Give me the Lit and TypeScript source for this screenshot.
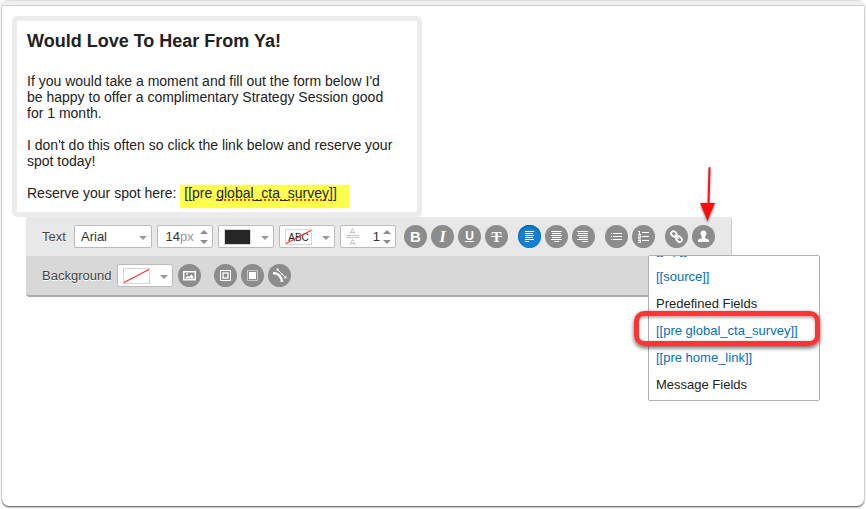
import { LitElement, html, css, svg, nothing } from "lit";
import { customElement, property } from "lit/decorators.js";

const bars = (rows: number[][]) =>
  rows.map(([x, y, w, h = 1]) => svg`<rect x=${x} y=${y} width=${w} height=${h} fill="#fff"/>`);

const icons: Record<string, unknown> = {
  bold: svg`<text x="11.5" y="17" text-anchor="middle" font-family="Liberation Sans, sans-serif" font-weight="bold" font-size="15" fill="#fff">B</text>`,
  italic: svg`<text x="11.5" y="17" text-anchor="middle" font-family="Liberation Serif, serif" font-style="italic" font-weight="bold" font-size="16" fill="#fff">I</text>`,
  underline: svg`<text x="11.5" y="15" text-anchor="middle" font-family="Liberation Sans, sans-serif" font-weight="bold" font-size="12" fill="#fff">U</text>${bars([[7, 16, 9]])}`,
  strike: svg`<text x="11.5" y="17" text-anchor="middle" font-family="Liberation Serif, serif" font-weight="bold" font-size="15" fill="#fff">T</text>${bars([[6, 11, 11]])}`,
  left: bars([[7, 6, 9], [7, 8, 8], [7, 10, 9], [7, 12, 8], [7, 14, 9], [7, 16, 4]]),
  center: bars([[6, 6, 11], [7, 8, 9], [6, 10, 11], [7, 12, 9], [6, 14, 11], [9, 16, 5]]),
  right: bars([[5, 6, 11], [6, 8, 10], [5, 10, 11], [7, 12, 9], [5, 14, 11], [10, 16, 6]]),
  bullets: bars([[6, 8, 1], [8, 8, 9], [6, 11, 1], [8, 11, 9], [6, 14, 1], [8, 14, 9]]),
  numbers: svg`${bars([[10, 7, 7], [10, 11, 7], [10, 15, 7]])}
    <path d="M6 6.5h1.5v3M6 9.5h3M6 11h2.5v1.5H6.5V14H9M6 15.5h2.5v1.5H7M8.5 17v.5H6" fill="none" stroke="#fff" stroke-width="1"/>`,
  link: svg`<g fill="none" stroke="#fff" stroke-width="1.8" transform="rotate(45 11.5 11.5)">
    <rect x="5" y="9.3" width="6" height="4.6" rx="2.3"/><rect x="12.3" y="9.3" width="6" height="4.6" rx="2.3"/><path d="M9 11.6h5.500" stroke-width="1.400"/></g>`,
  person: svg`<path d="M11.5 5.500c-2 0-3 1.300-2.900 3.200.1 1.500.7 2.400 1.300 3v1.200c-1 .8-3.900.9-3.900 2.800V17h11v-1.300c0-1.900-2.900-2-3.900-2.800v-1.200c.6-.6 1.200-1.500 1.300-3 .1-1.900-.9-3.200-2.900-3.200z" fill="#fff"/>`,
  image: svg`<rect x="5.750" y="7.750" width="11.500" height="8" fill="none" stroke="#fff" stroke-width="1.500"/>
    <path d="M7.500 14.500v-1l2-1.500 1.500.500 2.500-2 2 2.500v1.500z" fill="#fff"/><circle cx="9" cy="10" r=".9" fill="#fff"/>`,
  border: svg`<rect x="6.500" y="6.500" width="10" height="10" fill="none" stroke="#fff"/><rect x="9" y="9" width="5" height="5" fill="none" stroke="#fff" stroke-width="1.300"/>`,
  padding: svg`<rect x="6.500" y="6.500" width="10" height="10" fill="none" stroke="#fff" stroke-dasharray="1 1"/><rect x="8" y="8" width="7" height="7" fill="#fff"/>`,
  radius: svg`<path d="M5 9c5 0 8.500 3.500 9 9" fill="none" stroke="#fff" stroke-width="2.500"/>
    <path d="M9.500 5.500l8 8" stroke="#fff"/><path d="M8.500 4.500h2v2h-2zM16.500 12.500h2v2h-2z" fill="#fff"/><path d="M13 9h1.500v1.500H13z" fill="#fff"/>`,
};

const caret = html`<svg class="caret" width="8" height="4" aria-hidden="true"><path d="M0 0h8l-4 4z" fill="#999"/></svg>`;

@customElement("tool-button")
class ToolButton extends LitElement {
  @property() icon = "";
  @property() label = "";
  @property({ type: Boolean }) active = false;
  static styles = css`
    :host { display: block; }
    .tool { display: block; width: 23px; height: 23px; padding: 0; border: 0; border-radius: 50%; background: #8c8c8c; cursor: pointer; }
    .active { background: #127fd2; box-shadow: inset 0 1px 2px #0a5590; }
    svg { display: block; }
  `;
  render() {
    return html`<button class="tool ${this.active ? "active" : ""}" aria-label=${this.label} aria-pressed=${this.active ? "true" : "false"}>
      <svg width="23" height="23" viewBox="0 0 23 23" aria-hidden="true">${icons[this.icon]}</svg>
    </button>`;
  }
}

@customElement("color-picker")
class ColorPicker extends LitElement {
  @property() label = "";
  @property() kind = "none";
  static styles = css`
    :host { display: block; }
    .picker { display: flex; align-items: center; justify-content: space-between; box-sizing: border-box; width: 56px; height: 23px; padding: 0 4px 0 5px; border: 1px solid #bbb; border-radius: 2px; background: #fff; }
    .caret { margin-top: 2px; }
  `;
  render() {
    return html`<button class="picker" aria-label=${this.label}>
      <svg width="27" height="16" viewBox="0 0 27 16" aria-hidden="true">
        <rect x=".5" y=".5" width="26" height="15" fill=${this.kind === "dark" ? "#262626" : "#fff"} stroke="#d6d6d6"/>
        ${this.kind === "text" ? svg`<text x="13.5" y="12" text-anchor="middle" font-family="Liberation Sans, sans-serif" font-size="10" fill="#222">ABC</text>` : nothing}
        ${this.kind === "dark" ? nothing : svg`<path d="M1 14.500L26 1.500" stroke="#f23a2c" stroke-width="1.300"/>`}
      </svg>${caret}
    </button>`;
  }
}

@customElement("number-stepper")
class NumberStepper extends LitElement {
  @property() label = "";
  @property() value = "";
  @property() unit = "";
  static styles = css`
    :host { display: block; }
    .stepper { display: flex; align-items: center; box-sizing: border-box; width: 56px; height: 23px; padding: 0 4px 0 7px; border: 1px solid #bbb; border-radius: 2px; background: #fff; color: #333; font: 13px "Liberation Sans", Arial, sans-serif; }
    .value { min-width: 0; width: 15px; height: 20px; padding: 0; border: 0; background: none; color: inherit; font: inherit; text-align: right; outline: 0; }
    .unit { color: #999; }
    .arrows { display: flex; flex-direction: column; gap: 6px; margin-left: auto; }
    .arrow { display: block; width: 8px; height: 4px; padding: 0; border: 0; background: none; line-height: 0; }
    .arrow svg { display: block; }
    .spacing { margin: 0 6px 0 -2px; flex: none; }
  `;
  render() {
    return html`<div class="stepper">
      ${this.unit ? nothing : html`<svg class="spacing" width="13" height="19" viewBox="0 0 13 19" aria-hidden="true">
        <g fill="none" stroke="#c4c4c4"><path d="M0 8.500h13M0 10.500h13M4 7l2.500-5.500L9 7M5 5.500h3M4 18l2.500-5.500L9 18M5 16.500h3"/></g></svg>`}
      <input class="value" aria-label=${this.label} .value=${this.value}>
      ${this.unit ? html`<span class="unit">${this.unit}</span>` : nothing}
      <span class="arrows">
        <button class="arrow" aria-label="Increase"><svg width="8" height="4"><path d="M0 4h8l-4-4z" fill="#8c8c8c"/></svg></button>
        <button class="arrow" aria-label="Decrease"><svg width="8" height="4"><path d="M0 0h8l-4 4z" fill="#8c8c8c"/></svg></button>
      </span>
    </div>`;
  }
}

@customElement("app-root")
class AppRoot extends LitElement {
  static styles = css`
    :host { display: block; font-family: "Liberation Sans", Arial, sans-serif; background: #fff; }
    .window { box-sizing: border-box; min-height: calc(100vh - 3px); margin: 0 2px 3px; border-radius: 7px; box-shadow: 0 1px 2px #444; background: #fff; overflow: hidden; }
    .titlebar { box-sizing: border-box; height: 6px; border-top: 1px solid #ddd; border-bottom: 1px solid #d0d0d0; background: #f0f0f0; }
    .workspace { display: flex; flex-direction: column; align-items: flex-start; padding: 10px 10px 40px; }
    .editor { box-sizing: border-box; max-width: 410px; padding: 9px 20px 11px 10px; border: 5px solid #ececec; border-radius: 5px; color: #222; font-size: 14px; line-height: 16px; }
    .title { margin: 0 0 21px; font-size: 18px; line-height: 22px; }
    .para { margin: 0 0 16px; }
    .para:last-child { margin: 0; }
    .merge { padding: 0 12px 7px 4px; background: #ffff4d; color: inherit; }
    .misspelt { text-decoration: underline dotted #f03a20 2px; text-underline-offset: 1px; text-decoration-skip-ink: none; }
    .toolbar { margin-left: 14px; border-radius: 4px; border-bottom: 2px solid #aaa; background: #d8d8d8; box-shadow: 1px 0 0 #ccc; }
    .row { display: flex; align-items: center; gap: 5px; height: 39px; padding: 0 16px; color: #444; font-size: 13px; text-shadow: 0 1px 0 #fff; }
    .row.text { background: #e8e8e8; border-radius: 4px 4px 0 0; }
    .caption { min-width: 26px; margin-right: 1px; }
    .group { display: flex; gap: 4px; margin-left: 5px; }
    .group.first { margin-left: 3px; }
    .group.box { margin-left: 8px; }
    .select { position: relative; display: flex; }
    .font { appearance: none; width: 78px; height: 23px; padding: 0 16px 0 6px; border: 1px solid #bbb; border-radius: 2px; background: #fff; color: #333; font: inherit; }
    .select .caret { position: absolute; right: 5px; top: 11px; pointer-events: none; }
    .anchor { position: relative; }
    .popup { position: absolute; left: -44px; top: 30px; width: 172px; text-shadow: none; }
    .menu { display: flex; flex-direction: column; justify-content: flex-end; box-sizing: border-box; height: 146px; margin: 0; padding: 0 7px 2px; border: 1px solid #b0b0b0; border-radius: 2px; background: #fff; overflow: hidden; list-style: none; line-height: 27px; color: #222; white-space: nowrap; }
    .menu a { color: #0070c0; text-decoration: none; }
    .ring { position: absolute; box-sizing: border-box; left: -14px; right: 0; top: 56px; height: 35px; border: 5px solid #fc3434; border-radius: 10px; box-shadow: 0 2px 4px rgba(0,0,0,.6), inset 0 2px 3px rgba(0,0,0,.3); pointer-events: none; }
    .pointer { position: absolute; left: 5px; top: -60px; filter: drop-shadow(0 2px 1px rgba(0,0,0,.4)); pointer-events: none; }
  `;
  render() {
    return html`<main class="window">
      <div class="titlebar"></div>
      <div class="workspace">
        <article class="editor">
          <h1 class="title">Would Love To Hear From Ya!</h1>
          <p class="para">If you would take a moment and fill out the form below I'd be happy to offer a complimentary Strategy Session good for 1 month.</p>
          <p class="para">I don't do this often so click the link below and reserve your spot today!</p>
          <p class="para">Reserve your spot here: <mark class="merge">[[pre <span class="misspelt">global_cta_survey</span>]]</mark></p>
        </article>
        <div class="toolbar" role="toolbar">
          <div class="row text">
            <label class="caption" for="font">Text</label>
            <span class="select"><select class="font" id="font"><option>Arial</option></select>${caret}</span>
            <number-stepper label="Font size" value="14" unit="px"></number-stepper>
            <color-picker label="Text colour" kind="dark"></color-picker>
            <color-picker label="Text highlight" kind="text"></color-picker>
            <number-stepper label="Line spacing" value="1"></number-stepper>
            <div class="group first">
              <tool-button icon="bold" label="Bold"></tool-button>
              <tool-button icon="italic" label="Italic"></tool-button>
              <tool-button icon="underline" label="Underline"></tool-button>
              <tool-button icon="strike" label="Strikethrough"></tool-button>
            </div>
            <div class="group">
              <tool-button icon="left" label="Align left" active></tool-button>
              <tool-button icon="center" label="Align centre"></tool-button>
              <tool-button icon="right" label="Align right"></tool-button>
            </div>
            <div class="group">
              <tool-button icon="bullets" label="Bulleted list"></tool-button>
              <tool-button icon="numbers" label="Numbered list"></tool-button>
            </div>
            <div class="group">
              <tool-button icon="link" label="Link"></tool-button>
              <div class="anchor">
                <tool-button icon="person" label="Personalize"></tool-button>
                <svg class="pointer" width="20" height="56" viewBox="0 0 20 56" aria-hidden="true">
                  <path d="M12.500 3L11.500 40" stroke="#f01818" stroke-width="2" stroke-linecap="round"/><path d="M3 38h15L10.500 56z" fill="#ff0d0d"/>
                </svg>
                <div class="popup">
                  <ul class="menu">
                    <li><a href="#">[[zip]]</a></li>
                    <li><a href="#">[[source]]</a></li>
                    <li>Predefined Fields</li>
                    <li><a href="#">[[pre global_cta_survey]]</a></li>
                    <li><a href="#">[[pre home_link]]</a></li>
                    <li>Message Fields</li>
                  </ul>
                  <div class="ring"></div>
                </div>
              </div>
            </div>
          </div>
          <div class="row">
            <span class="caption">Background</span>
            <color-picker label="Background colour"></color-picker>
            <tool-button icon="image" label="Background image"></tool-button>
            <div class="group box">
              <tool-button icon="border" label="Border"></tool-button>
              <tool-button icon="padding" label="Padding"></tool-button>
              <tool-button icon="radius" label="Corner radius"></tool-button>
            </div>
          </div>
        </div>
      </div>
    </main>`;
  }
}
